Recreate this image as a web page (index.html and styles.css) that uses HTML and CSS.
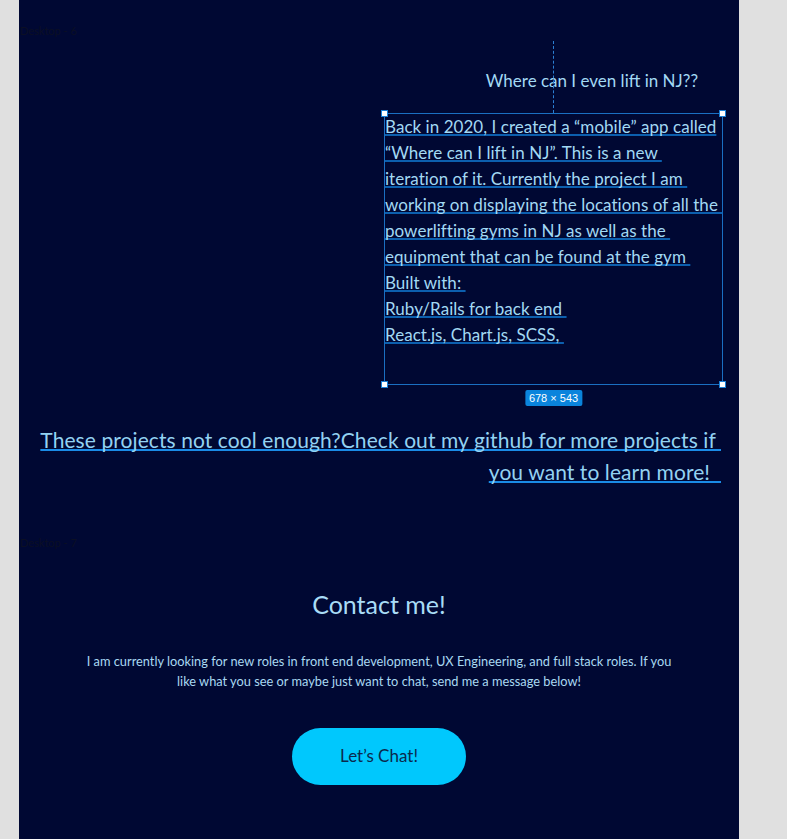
FILE: index.html
```html
<!DOCTYPE html>
<html lang="en">
<head>
<meta charset="utf-8">
<title>Portfolio</title>
<link rel="stylesheet" href="styles.css">
</head>
<body>
<main class="panel">
  <div class="frame-label">Desktop - 6</div>

  <section class="project">
    <h2 class="project-title">Where can I even lift in NJ??</h2>
    <div class="selection">
      <span class="guide"></span>
      <p class="project-text">
        <span class="ln">Back in 2020, I created a “mobile” app called</span>
        <span class="ln">“Where can I lift in NJ”. This is a new&nbsp;</span>
        <span class="ln">iteration of it. Currently the project I am&nbsp;</span>
        <span class="ln">working on displaying the locations of all the&nbsp;</span>
        <span class="ln">powerlifting gyms in NJ as well as the&nbsp;</span>
        <span class="ln">equipment that can be found at the gym&nbsp;</span>
        <span class="ln">Built with:&nbsp;</span>
        <span class="ln">Ruby/Rails for back end&nbsp;</span>
        <span class="ln">React.js, Chart.js, SCSS,&nbsp;</span>
      </p>
      <span class="handle tl"></span>
      <span class="handle tr"></span>
      <span class="handle bl"></span>
      <span class="handle br"></span>
      <span class="size-badge">678 × 543</span>
    </div>
  </section>

  <p class="more">
    <a class="more-line" href="#">These projects not cool enough?Check out my github for more projects if&nbsp;</a>
    <a class="more-line" href="#">you want to learn more!&nbsp;&nbsp;</a>
  </p>

  <div class="frame-label label-7">Desktop - 7</div>

  <section class="contact">
    <h2 class="contact-title">Contact me!</h2>
    <p class="contact-text">I am currently looking for new roles in front end development, UX Engineering, and full stack roles. If you<br>like what you see or maybe just want to chat, send me a message below!</p>
    <button class="chat-btn" type="button">Let’s Chat!</button>
  </section>
</main>
</body>
</html>
```

FILE: styles.css
```css
* { box-sizing: border-box; }

html, body {
  margin: 0;
  padding: 0;
}

body {
  background: #e0e0e0;
  font-family: Lato, "Open Sans", sans-serif;
  height: 839px;
  overflow: hidden;
}

.panel {
  margin-left: 19px;
  width: 720px;
  min-height: 839px;
  background: #000833;
  color: #a3d9f4;
  display: flex;
  flex-direction: column;
}

.frame-label {
  margin-top: 24px;
  height: 14px;
  line-height: 14px;
  font-size: 11px;
  padding-left: 1px;
  color: #0b0f24;
}

.project {
  margin-left: 365px;
  width: 339px;
  display: flex;
  flex-direction: column;
}

.project-title {
  margin: 33px 0 0;
  font-size: 17px;
  line-height: 20px;
  font-weight: 400;
  text-align: right;
  padding-right: 25px;
}

.selection {
  position: relative;
  margin-top: 22px;
  height: 272px;
  border: 1px solid #1a6fc2;
}

.guide {
  position: absolute;
  left: 168px;
  top: -73px;
  height: 72px;
  border-left: 1px dashed #2b7fd4;
}

.project-text {
  margin: 0;
  font-size: 17px;
  letter-spacing: 0.04px;
  line-height: 26px;
  display: flex;
  flex-direction: column;
  align-items: flex-start;
}

.ln {
  white-space: nowrap;
  text-decoration: underline;
  text-decoration-color: #0c5fae;
  text-decoration-thickness: 2px;
  text-underline-offset: 1px;
  text-decoration-skip-ink: none;
}

.handle {
  position: absolute;
  width: 7px;
  height: 7px;
  background: #ffffff;
  border: 1px solid #1a7fd6;
}
.tl { left: -4px; top: -4px; }
.tr { right: -4px; top: -4px; }
.bl { left: -4px; bottom: -4px; }
.br { right: -4px; bottom: -4px; }

.size-badge {
  position: absolute;
  top: calc(100% + 6px);
  left: 50%;
  transform: translateX(-50%);
  background: #0a84dc;
  color: #ffffff;
  font-family: "Liberation Sans", Arial, sans-serif;
  font-size: 11px;
  line-height: 16px;
  padding: 0 4px;
  border-radius: 2px;
  white-space: nowrap;
}

.more {
  margin: 39px 0 0;
  padding-right: 18px;
  display: flex;
  flex-direction: column;
  align-items: flex-end;
  font-size: 21px;
  letter-spacing: 0.08px;
  line-height: 32px;
}

.more-line {
  white-space: nowrap;
  color: #93d2f2;
  text-decoration: underline;
  text-decoration-color: #1a8be6;
  text-decoration-thickness: 2px;
  text-underline-offset: 1px;
  text-decoration-skip-ink: none;
}

.label-7 {
  margin-top: 48px;
}

.contact {
  display: flex;
  flex-direction: column;
  align-items: center;
}

.contact-title {
  margin: 39px 0 0;
  font-size: 25px;
  line-height: 30px;
  font-weight: 400;
  color: #a9dcf6;
}

.contact-text {
  margin: 32px 0 0;
  font-size: 12.8px;
  line-height: 20px;
  text-align: center;
  color: #a9d9f2;
}

.chat-btn {
  margin-top: 37px;
  width: 174px;
  height: 57px;
  border: none;
  border-radius: 29px;
  background: #00c8fd;
  color: #0b2a4d;
  font-family: inherit;
  font-size: 17px;
  padding-bottom: 3px;
  cursor: pointer;
}
```
